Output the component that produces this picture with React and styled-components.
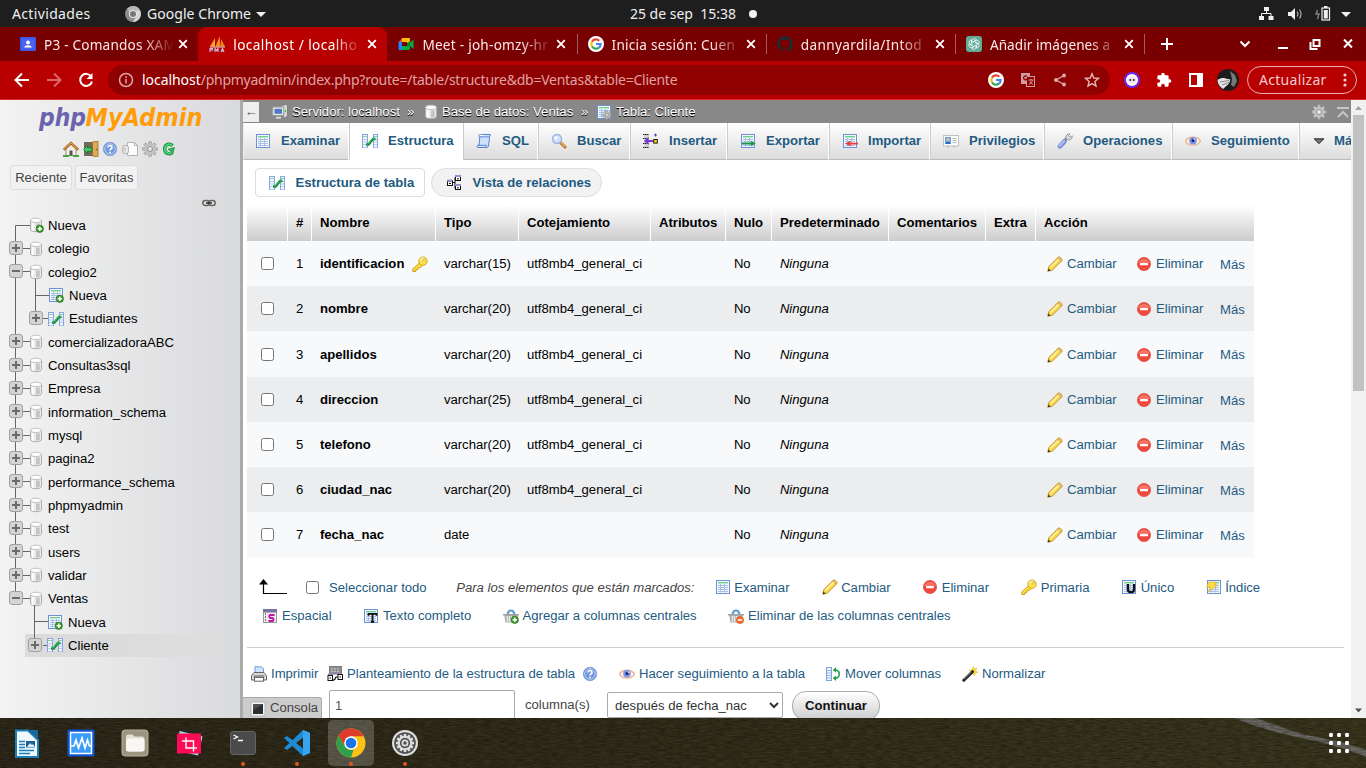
import React from "react";
import styled, { createGlobalStyle, css } from "styled-components";

const Global = createGlobalStyle`
  * { box-sizing: border-box; }
  html, body { margin: 0; padding: 0; overflow: hidden; }
  svg { display: block; flex: none; }
`;

const Desktop = styled.div`
  width: 1366px;
  height: 768px;
  display: flex;
  flex-direction: column;
  overflow: hidden;
  background: #fff;
  font-family: "Liberation Sans", Arial, sans-serif;
`;

/* ---------- icons ---------- */

const TableBase = () => (
  <>
    <rect x="1.5" y="1.5" width="13" height="13" fill="#f4f8ff" stroke="#6f8fd6" />
    <rect x="3" y="3" width="10" height="1.4" fill="#6fd08a" />
    <path d="M3 6.5h10M3 8.5h10M3 10.5h10M3 12.5h10M5.5 5v8.5M9.5 5v8.5" stroke="#a9bfe8" strokeWidth="1" />
  </>
);
const PlusBadge = () => (
  <>
    <circle cx="11.800" cy="11.800" r="3.700" fill="#3a9a2c" stroke="#246d1a" strokeWidth=".6" />
    <path d="M11.800 9.600v4.400M9.600 11.800H14" stroke="#fff" strokeWidth="1.500" />
  </>
);
const Cylinder = () => (
  <>
    <path d="M2.500 3.500v9c0 1.300 2.500 2.200 5.500 2.200s5.500-.9 5.500-2.200v-9z" fill="#ececec" stroke="#adadad" />
    <path d="M8 6.500h3.800V13L8 13.800z" fill="#c4c4c4" />
    <path d="M4 6v7.300l1.500.6V6.400z" fill="#fff" />
    <ellipse cx="8" cy="3.400" rx="5.500" ry="2.200" fill="#fdfdfd" stroke="#c3c3c3" />
  </>
);
const Basket = () => (
  <>
    <path d="M4.500 7C5 3.500 6.500 2.500 8 2.500S11 3.500 11.500 7" fill="none" stroke="#5b9bd0" strokeWidth="2.200" />
    <path d="M0 6h16v1.500h-1.300L13.500 14.500h-11L1.300 7.500H0z" fill="#a5a5a5" />
    <path d="M2.500 9h11M3 11h10.500M3 13h10M4.500 8v6M6.500 8v6M8.500 8v6M10.500 8v6M12.500 8v6" stroke="#fff" strokeWidth=".6" />
  </>
);
const GearShape = ({ fill, stroke, hole }) => (
  <>
    {[0, 45, 90, 135].map((a) => (
      <rect key={a} x="6.600" y=".6" width="2.800" height="14.800" rx=".5" fill={fill} stroke={stroke} strokeWidth=".6" transform={`rotate(${a} 8 8)`} />
    ))}
    <circle cx="8" cy="8" r="5.300" fill={fill} />
    <circle cx="8" cy="8" r="2.400" fill={hole} stroke={stroke} />
  </>
);

const ART = {
  table: <TableBase />,
  tableNew: (<><TableBase /><PlusBadge /></>),
  tableGear: (<><TableBase /><g transform="translate(6 6) scale(.62)"><GearShape fill="#b9b9b9" stroke="#777" hole="#eee" /></g></>),
  db: <Cylinder />,
  dbNew: (<><Cylinder /><PlusBadge /></>),
  structure: (
    <>
      <rect x="0" y="1" width="5.500" height="14" fill="#f2f6ff" />
      <rect x="11" y="1" width="5" height="14" fill="#f2f6ff" />
      <path d="M.500 1v14M5.500 1v14M11.500 1v14M15.500 1v14" stroke="#8aa6e2" />
      <path d="M1 1.500h4M12 1.500h3" stroke="#8aa6e2" />
      <path d="M1 3.500h4M12 3.500h3" stroke="#7fd59a" />
      <path d="M1 6.500h4M1 9h4M1 11.500h4M12 6.500h3M12 9h3M12 11.500h3M1 14.500h4M12 14.500h3" stroke="#b9caee" />
      <path d="M4 11.500h2.500l4.500-5.500h2.500" fill="none" stroke="#128a38" strokeWidth="2.600" />
      <path d="M4.500 11.100h1.700l4.500-5.300h2.300" fill="none" stroke="#3fc568" strokeWidth=".9" />
    </>
  ),
  sql: (
    <>
      <path d="M4 1.500h10.500l-.8 2-1.200 9.500c-.2 1-.9 1.500-1.800 1.500H1.500c-.8-.6-.6-2 .6-2.200h1z" fill="#cfe2fb" stroke="#5a87d4" />
      <path d="M4 1.500c-1.300 0-1.600 2.200-.3 2.300h9.800" fill="#fff" stroke="#5a87d4" />
      <path d="M1.500 12.300h8.800v2" fill="none" stroke="#5a87d4" />
    </>
  ),
  search: (
    <>
      <path d="M9.500 9.500l4.500 4.500" stroke="#b06c1e" strokeWidth="3" strokeLinecap="round" />
      <path d="M9.800 9.500l4 4" stroke="#f3b75e" strokeWidth="1.200" strokeLinecap="round" />
      <circle cx="6" cy="6" r="4.500" fill="#cfe1ff" stroke="#9db3e0" strokeWidth="1.400" />
      <circle cx="5" cy="4.800" r="1.600" fill="#fff" />
    </>
  ),
  insert: (
    <>
      <rect x="1" y="1" width="5" height="14" fill="#d2d2d2" />
      <path d="M0 1.500h6M0 5.500h6M0 10.500h6M0 14.500h6" stroke="#222" strokeDasharray="1.500 .5" />
      <path d="M1 8l4.500-4V7H10v2H5.500v3z" fill="#7a35d6" />
      <rect x="10.700" y="6.500" width="3.600" height="3.600" fill="#ffd400" stroke="#222" />
      <path d="M12.500.5v3M11 2h3" stroke="#7a35d6" strokeWidth="1.100" />
    </>
  ),
  export: (<><TableBase /><path d="M2 9.500h9V7.800l4.800 2.700-4.800 2.700v-1.700H2z" fill="#1b9a43" /></>),
  import: (<><TableBase /><path d="M16 9.700H8.500V7.800L3 10.600l5.500 2.800v-1.900H16z" fill="#ec3b3b" /></>),
  rights: (
    <>
      <rect x=".5" y="2.500" width="15" height="10.500" fill="#fbfbfb" stroke="#c1c1c1" />
      <rect x="2" y="4" width="6" height="7" fill="#5fa5ea" />
      <circle cx="5" cy="6.500" r="1.700" fill="#f0bd8d" />
      <path d="M2.500 11c.3-3 4.700-3 5 0z" fill="#2b66c0" />
      <path d="M9.500 5.500h4M9.500 7.500h4M9.500 9.500h4" stroke="#b5b5b5" />
      <path d="M4 13.800h2M10 13.800h2" stroke="#aaa" />
    </>
  ),
  wrench: (
    <>
      <path d="M7.500 7.500l3.200-3.300" stroke="#9b9b9b" strokeWidth="3" />
      <path d="M8.800 4.800C8.500 2.500 10.500.6 13 .9l-1.700 2 1.700 1.500 2.300-1.600c.4 2.300-1.600 4.600-4 4.200z" fill="#e0e0e0" stroke="#888" strokeWidth=".8" />
      <path d="M3 13.200l4.500-4.800" stroke="#6f84d2" strokeWidth="4.600" strokeLinecap="round" />
      <path d="M2.800 12.800l4.400-4.600" stroke="#a9baf5" strokeWidth="2.600" strokeLinecap="round" />
    </>
  ),
  eye: (
    <>
      <path d="M.5 8C3 3 13 3 15.500 8 13 13.500 3 13.500 .5 8z" fill="#fdf1e4" stroke="#e8b48d" strokeWidth="1.400" />
      <circle cx="8" cy="7.800" r="3.800" fill="#7b93ec" />
      <circle cx="8" cy="7.500" r="1.500" fill="#15205c" />
      <circle cx="9.400" cy="6.300" r=".7" fill="#fff" />
    </>
  ),
  more: <path d="M2.500 5.500h11L8 11z" fill="#777" stroke="#111" />,
  relations: (
    <>
      <path d="M6 7.500h3M9 2.500v11M9 3.500h1M9 12.500h1" stroke="#111" fill="none" />
      <rect x="1.500" y="6" width="5" height="4.500" fill="#fff" stroke="#111" />
      <rect x="9.500" y="1.500" width="5" height="4" fill="#fff" stroke="#111" />
      <rect x="9.500" y="10.500" width="5" height="4" fill="#fff" stroke="#111" />
      <path d="M1 5.500h5M9 1h6M9 10h6" stroke="#a48bd0" strokeWidth="1.800" />
      <path d="M11 3.800h2M11 12.800h2M3 8.500h2" stroke="#111" />
    </>
  ),
  key: (
    <>
      <path d="M8.500 6L.8 12.800v2.700h3v-1.800h2l.3-2 2.200-.2L11 9" fill="#f8dc3a" stroke="#c79a1b" strokeWidth=".9" />
      <circle cx="11" cy="5.200" r="4.200" fill="#fbe34f" stroke="#d0a21e" strokeWidth=".9" />
      <path d="M8.300 4.200C9 2.500 11 2 12 2.300" fill="none" stroke="#fff6b8" strokeWidth="1.200" />
      <circle cx="12.200" cy="4" r="1.100" fill="#fff" stroke="#c79a1b" strokeWidth=".6" />
    </>
  ),
  pencil: (
    <>
      <path d="M.8 15.200l.9-4.500L11.200 1.300c1.400-1.100 4.600 1.900 3.500 3.500L5.200 14.300z" fill="#f9d746" stroke="#b98a22" strokeWidth=".9" />
      <path d="M3.500 11.500l8.300-8.300" stroke="#fff3a8" strokeWidth="1.600" />
      <path d="M10.800 1.900l3.400 3.300.7-1.300c.3-1.300-1.900-3.200-3-2.800z" fill="#f5c486" stroke="#b98a22" strokeWidth=".5" />
      <path d="M.8 15.200l.6-2.800 2.200 2.200z" fill="#333" />
    </>
  ),
  drop: (
    <>
      <circle cx="8" cy="8" r="6.600" fill="#f0483c" stroke="#d9625a" strokeWidth=".9" />
      <path d="M2.300 7C3.500 1.500 12.500 1.500 13.700 7z" fill="#ff9184" opacity=".6" />
      <rect x="4" y="6.900" width="8" height="2.300" rx=".5" fill="#fff" />
    </>
  ),
  unique: (<><TableBase /><path d="M7 5v5.500c0 3.600 6 3.600 6 0V5" fill="none" stroke="#111" strokeWidth="2.300" /></>),
  index: (<><TableBase /><path d="M3 3h7.500L8.500 6h3L2.500 12.500 4.500 8H.5z" fill="#fbe04b" stroke="#e0b22c" strokeWidth=".8" /></>),
  spatial: (
    <>
      <rect x="1.500" y="1.500" width="13" height="13" fill="#eee" stroke="#999" />
      <rect x="1" y="1" width="14" height="3.500" fill="#7c729f" />
      <path d="M3.500 5v10" stroke="#777" strokeDasharray="2 1" />
      <path d="M12.500 7H8.300c-1.400 0-1.400 2.900 0 2.900h2c1.600 0 1.600 3.100 0 3.100H6.500" fill="none" stroke="#c414a8" strokeWidth="2" />
    </>
  ),
  fulltext: (<><TableBase /><path d="M5 5.800h9M9.500 5v9.500M7.800 13.800h3.400M5.500 5v2.800M13.500 5v2.800" stroke="#111" strokeWidth="1.800" /></>),
  basketAdd: (<><Basket /><PlusBadge /></>),
  basketDel: (<><Basket /><circle cx="12" cy="12" r="3.600" fill="#ee6a2c" stroke="#c14c12" strokeWidth=".6" /><path d="M9.800 12h4.400" stroke="#fff" strokeWidth="1.500" /></>),
  print: (
    <>
      <path d="M4 7V.8h6.500L12.500 3v4z" fill="#cfe4ff" stroke="#6f9ae0" />
      <path d="M3 6.500h10l2.500 3v4.500H.5V9.500z" fill="#dadada" stroke="#666" />
      <path d="M2.500 10h11" stroke="#555" />
      <rect x="3.500" y="11.500" width="9" height="3.700" fill="#fff" stroke="#666" />
    </>
  ),
  propose: (
    <>
      <rect x="2.500" y=".5" width="12" height="7.500" fill="#8f8f8f" stroke="#7c7c7c" />
      <path d="M4 3h9M4 5.500h9" stroke="#c6c6c6" strokeDasharray="2 1" />
      <path d="M1 8.500h5M10 7.800h5" stroke="#9a84cc" strokeWidth="1.800" />
      <rect x="1" y="9.500" width="4.500" height="5" fill="#fff" stroke="#111" />
      <rect x="11" y="8.500" width="4.500" height="5" fill="#fff" stroke="#111" />
      <path d="M6 14.500l2-1.500 1-2h2M2.500 12H4M12.500 11H14" stroke="#111" fill="none" strokeWidth="1.200" />
    </>
  ),
  help: (
    <>
      <circle cx="8" cy="8" r="6.700" fill="#5b84cf" stroke="#8aa6dc" strokeWidth="1" />
      <circle cx="8" cy="8" r="5.300" fill="#7399dd" stroke="#dbe6fa" strokeWidth=".8" />
      <path d="M6 6.600c0-2.900 4.200-2.600 4 0C9.900 7.900 8 7.900 8 9.500M8 10.700v1.600" fill="none" stroke="#fff" strokeWidth="1.600" />
    </>
  ),
  move: (
    <>
      <rect x="1.500" y="1.500" width="5" height="13" fill="#eef4ff" stroke="#7f9fdf" />
      <path d="M2 4.500h4M2 7h4M2 9.500h4M2 12h4" stroke="#9ab4e8" />
      <path d="M8.500 4h2c5 .3 5 7.800 0 8.200h-2" fill="none" stroke="#1fa044" strokeWidth="1.500" />
      <path d="M8 4l3-2.700v5.400zM8 12.200l3-2.700v5.400z" fill="#1fa044" />
    </>
  ),
  wand: (
    <>
      <path d="M11.200.5l1 2.400 2.600-.8-.9 2.500 1.900 1.900-2.600.5-.6 2.600-2-1.800-2.400.7.900-2.500-1.900-1.700 2.700-.3z" fill="#fbe04b" stroke="#ddb322" strokeWidth=".6" />
      <path d="M1.800 14.200l8.700-8.500" stroke="#222" strokeWidth="3" strokeLinecap="round" />
      <path d="M2 13.300l7.500-7.300" stroke="#999" strokeWidth=".9" />
    </>
  ),
  server: (
    <>
      <path d="M9 2l4-1.500 2.500.5v11l-3.500 2.500z" fill="#d5d5d5" stroke="#777" strokeWidth=".8" />
      <path d="M13.500 6v2" stroke="#2ecc40" strokeWidth="1.400" />
      <rect x=".7" y="3" width="11" height="8.500" fill="#eaeaea" stroke="#999" />
      <rect x="2.500" y="4.800" width="7.500" height="5" fill="#4f7ac8" />
      <path d="M4 13.700h5" stroke="#ddd" strokeWidth="1.800" />
    </>
  ),
  home: (
    <>
      <path d="M3 8v6.500h10V8" fill="#f8f2e6" stroke="#9c8f78" />
      <path d="M.8 8.800L8 2l7.200 6.800" fill="none" stroke="#a8641d" strokeWidth="2.600" />
      <path d="M1 8.300l7-6.500 7 6.500" fill="none" stroke="#efb456" strokeWidth="1" />
      <rect x="6.500" y="9.500" width="3" height="5" fill="#555" />
      <path d="M0 15h6M10 15h6" stroke="#44a83d" strokeWidth="2" />
    </>
  ),
  exit: (
    <>
      <rect x="1" y="1" width="10" height="14" fill="#6f6a58" />
      <path d="M9.500 1l5.500-.8v15.600L9.500 15z" fill="#dfaa55" stroke="#9c6a22" strokeWidth=".8" />
      <path d="M.5 8.500l4-4v2.300h4.500v3.400H4.500v2.300z" fill="#44c768" stroke="#14722e" strokeWidth=".8" />
      <circle cx="13.500" cy="8.500" r=".7" fill="#754b0e" />
    </>
  ),
  docs: (
    <>
      <path d="M5.500 1.500h7l3 3v10h-10z" fill="#fcfcfc" stroke="#b4b4b4" />
      <path d="M12.500 1.500v3h3" fill="none" stroke="#b4b4b4" />
      <path d="M.8 5.500v6c1 1.300 4.500 1.300 5.500 0v-6c-1-1.300-4.500-1.300-5.500 0z" fill="#f0f0f0" stroke="#a5a5a5" />
      <path d="M3 6.500v4" stroke="#aaa" />
    </>
  ),
  gear: <GearShape fill="#c3c3c3" stroke="#8c8c8c" hole="#eee" />,
  reload: (
    <>
      <path d="M11.500 4.800C9 1.800 3.700 3.200 3.700 8c0 4.800 5 6 7.800 3.500" fill="none" stroke="#168a3c" strokeWidth="3.400" />
      <path d="M11.300 4.800C9 2 3.900 3.400 3.900 8c0 4.400 4.600 5.600 7.200 3.300" fill="none" stroke="#4fd078" strokeWidth="1.900" />
      <path d="M7 8.300L13.500 6.500 12 12z" fill="#35b860" stroke="#168a3c" strokeWidth=".7" />
    </>
  ),
  link: (
    <>
      <rect x="1.800" y="5.500" width="6.500" height="5" rx="2.500" fill="none" stroke="#666" strokeWidth="1.500" />
      <rect x="7.700" y="5.500" width="6.500" height="5" rx="2.500" fill="none" stroke="#666" strokeWidth="1.500" />
      <path d="M5 8h6" stroke="#333" strokeWidth="1.600" />
    </>
  ),
  console: (
    <>
      <rect x="1" y="1" width="14" height="14" fill="#f7f7f7" stroke="#b5b5b5" />
      <rect x="3" y="3" width="10" height="10" fill="#2d2f31" />
      <path d="M3 3h10L3 9z" fill="#4e5153" />
    </>
  ),
};
const Icon = ({ name, size = 16 }) => (
  <svg width={size} height={size} viewBox="0 0 16 16">{ART[name]}</svg>
);

/* ---------- GNOME top bar ---------- */

const uiFont = css`font-family: "Noto Sans", "Open Sans", sans-serif;`;

const TopBar = styled.header`
  ${uiFont}
  height: 27px;
  flex: none;
  display: grid;
  grid-template-columns: 1fr auto 1fr;
  align-items: center;
  background: #1e1e1e;
  color: #f0f0f0;
  font-size: 14px;
  line-height: 27px;
`;
const TopGroup = styled.div`
  display: flex;
  align-items: center;
  white-space: pre;
  justify-content: ${(p) => (p.$end ? "flex-end" : "flex-start")};
  padding-left: ${(p) => p.$left || 0}px;
  padding-right: ${(p) => p.$right || 0}px;
  gap: ${(p) => p.$gap || 0}px;
`;
const TopText = styled.span`
  width: ${(p) => (p.$w ? `${p.$w}px` : "auto")};
  margin-top: -1px;
  letter-spacing: ${(p) => p.$track || 0}px;
`;
const NoticeDot = styled.span`
  width: 8px;
  height: 8px;
  border-radius: 50%;
  background: #f2f2f2;
`;

/* ---------- browser chrome ---------- */

const TabStrip = styled.div`
  ${uiFont}
  height: 34px;
  flex: none;
  display: flex;
  background: #780000;
  color: #fbe9e9;
  padding-left: 9px;
`;
const BrowserTab = styled.div`
  width: 189.200px;
  height: 34px;
  flex: none;
  display: flex;
  align-items: center;
  padding: 0 9px 0 11px;
  border-radius: 9px 9px 0 0;
  background: ${(p) => (p.$active ? "#b80000" : "transparent")};
  color: ${(p) => (p.$active ? "#fff" : "#fbe9e9")};
  ${(p) => p.$active && css`box-shadow: -6px 18px 0 -6px #b80000, 6px 18px 0 -6px #b80000;`}
`;
const TabTitle = styled.span`
  width: 134px;
  margin-left: 8px;
  white-space: nowrap;
  font-size: 13.600px;
  letter-spacing: ${(p) => p.$track || 0}px;
  mask-image: linear-gradient(90deg, #000 74%, transparent 97%);
`;
const TabSeparator = styled.i`
  width: 1px;
  height: 20px;
  margin: 7px -1px 0 0;
  background: #a85a5a;
`;
const StripButtons = styled.div`
  display: flex;
  align-items: center;
  margin-left: -1.200px;
`;

const Toolbar = styled.div`
  ${uiFont}
  height: 39px;
  flex: none;
  display: flex;
  align-items: center;
  padding: 0 9px 1px 14px;
  background: #b80000;
  border-bottom: 1px solid #d42a2a;
`;
const NavButtons = styled.div`
  width: 94px;
  display: flex;
  gap: 16px;
`;
const Omnibox = styled.div`
  width: 1002px;
  height: 30px;
  flex: none;
  border-radius: 15px;
  display: flex;
  align-items: center;
  padding: 0 10px;
  background: #8f0000;
`;
const Url = styled.span`
  flex: 1;
  margin-left: 8px;
  font-size: 14px;
  letter-spacing: -.250px;
  color: #dfa3a3;
  b { font-weight: 400; color: #fff; letter-spacing: -.050px; }
`;
const OmniIcons = styled.div`
  display: flex;
  align-items: center;
  gap: 16px;
`;
const Extensions = styled.div`
  display: flex;
  align-items: center;
  gap: 16px;
  margin-left: 14px;
`;
const UpdateButton = styled.div`
  width: 110px;
  height: 28px;
  flex: none;
  margin-left: 8px;
  border: 1px solid #e9b0b0;
  border-radius: 14px;
  display: flex;
  align-items: center;
  justify-content: space-between;
  padding: 0 9px 0 11px;
  color: #f7cccc;
  font-size: 14px;
  letter-spacing: .300px;
`;

const GoogleG = ({ size = 16 }) => (
  <svg width={size} height={size} viewBox="0 0 16 16">
    <circle cx="8" cy="8" r="8" fill="#fff" />
    <path d="M11.300 4.700A4.700 4.700 0 0 0 4 5.600" fill="none" stroke="#ea4335" strokeWidth="2.100" />
    <path d="M4 5.600a4.700 4.700 0 0 0 0 4.800" fill="none" stroke="#fbbc05" strokeWidth="2.100" />
    <path d="M4 10.400a4.700 4.700 0 0 0 6.900 1.300" fill="none" stroke="#34a853" strokeWidth="2.100" />
    <path d="M8 8h4.700a4.700 4.700 0 0 1-1.800 3.700" fill="none" stroke="#4285f4" strokeWidth="2.100" />
  </svg>
);
const FAV = {
  classroom: (<svg width="16" height="16"><rect y="1" width="16" height="14" rx="1" fill="#4058e8" /><rect x="2" y="3" width="12" height="10" fill="#4a63f2" /><circle cx="8" cy="6.500" r="1.900" fill="#fff" /><path d="M4.300 11.500c0-3 7.400-3 7.400 0z" fill="#fff" /></svg>),
  pma: (<svg width="16" height="17"><path d="M1 10.500L6 2v8.500z" fill="#f5a623" /><path d="M6.500 10.500L10.500.5l1.200 10z" fill="#f78f1e" /><path d="M12 10.500V3l4 7.500z" fill="#e8871a" /><path d="M1 11h15" stroke="#e2d4c8" /><path d="M1 16v-3.500h2.500v1.500H1M6 16v-3.500l1.500 2 1.500-2V16M12 16l1.500-3.500L15 16M12.500 15h2" fill="none" stroke="#c9c4e6" strokeWidth="1.100" /></svg>),
  meet: (<svg width="16" height="16"><path d="M4 2h7a1 1 0 0 1 1 1v4H4z" fill="#fbbc04" /><path d="M4 2v4H.5z" fill="#ea4335" /><path d="M.5 6H4v8H1.500a1 1 0 0 1-1-1z" fill="#2684fc" /><path d="M4 10h8v3a1 1 0 0 1-1 1H4z" fill="#00ac47" /><path d="M9 8l3-3v5H9z" fill="#00832d" /><path d="M12 6.500l3.500-3v9.500L12 10z" fill="#00ac47" /><rect x="4" y="6" width="5" height="4" fill="#780000" /></svg>),
  google: <GoogleG />,
  github: (<svg width="16" height="16" viewBox="0 0 16 16"><path fill="#24292f" d="M8 0C3.580 0 0 3.580 0 8c0 3.540 2.290 6.530 5.470 7.590.4.070.55-.17.55-.38 0-.19-.01-.82-.01-1.490-2.010.37-2.530-.49-2.690-.94-.09-.23-.48-.94-.82-1.130-.28-.15-.68-.52-.01-.53.63-.01 1.080.58 1.230.82.72 1.210 1.870.87 2.330.66.07-.52.28-.87.51-1.070-1.780-.2-3.640-.89-3.640-3.950 0-.87.31-1.590.82-2.150-.08-.2-.36-1.020.08-2.120 0 0 .67-.21 2.200.82a7.400 7.400 0 0 1 4 0c1.530-1.040 2.200-.82 2.200-.82.44 1.100.16 1.920.08 2.120.51.56.82 1.270.82 2.150 0 3.070-1.870 3.750-3.650 3.950.29.25.54.73.54 1.480 0 1.070-.01 1.930-.01 2.200 0 .21.15.46.55.38A8 8 0 0 0 16 8c0-4.420-3.580-8-8-8z" /></svg>),
  gpt: (<svg width="16" height="16"><rect width="16" height="16" rx="3" fill="#62ab98" />{[0, 60, 120, 180, 240, 300].map((a) => (<path key={a} d="M6 8V4.600C6 2.500 9.500 1.800 10.300 4L7.600 5.600" fill="none" stroke="#fff" strokeWidth=".8" transform={`rotate(${a} 8 8)`} />))}</svg>),
};
const Cross = () => (
  <svg width="10" height="10" viewBox="0 0 10 10"><path d="M1.200 1.200l7.600 7.600M8.800 1.200L1.200 8.800" stroke="#fff" strokeWidth="1.800" /></svg>
);
const TABS = [
  ["classroom", "P3 - Comandos XAM", 0.2],
  ["pma", "localhost / localho", 0.45],
  ["meet", "Meet - joh-omzy-hr", 0.25],
  ["google", "Inicia sesión: Cuen", 0.25],
  ["github", "dannyardila/Intod", 0.35],
  ["gpt", "Añadir imágenes a", 0.05],
];

const BrowserChrome = () => (
  <>
    <TabStrip>
      {TABS.map(([fav, title, track], i) => (
        <React.Fragment key={fav}>
          <BrowserTab $active={i === 1}>
            {FAV[fav]}
            <TabTitle $track={track}>{title}</TabTitle>
            <Cross />
          </BrowserTab>
          {i > 1 && <TabSeparator />}
        </React.Fragment>
      ))}
      <StripButtons>
        <svg width="223" height="34" viewBox="1143 27 223 34" fill="none" stroke="#fff">
          <path d="M1161 44h12M1167 38v12" strokeWidth="2" />
          <path d="M1240.500 41.500l4.500 4.500 4.500-4.500" strokeWidth="2" />
          <path d="M1278 48h10" strokeWidth="2" />
          <path d="M1313.500 40h6v6h-6z" strokeWidth="2" />
          <path d="M1310.500 42v7h7" strokeWidth="2" />
          <path d="M1344 39.500l8 8M1352 39.500l-8 8" strokeWidth="2" />
        </svg>
      </StripButtons>
    </TabStrip>
    <Toolbar>
      <NavButtons>
        <svg width="16" height="16" fill="none" stroke="#fff" strokeWidth="2"><path d="M15 8H2M8 1.500L1.500 8 8 14.500" /></svg>
        <svg width="16" height="16" fill="none" stroke="#d76a6a" strokeWidth="2"><path d="M1 8h13M8 1.500L14.500 8 8 14.500" /></svg>
        <svg width="16" height="16" fill="none" stroke="#fff" strokeWidth="2"><path d="M13.200 4.500A6 6 0 1 0 14 9.500" /><path d="M14.500 1v6h-6z" fill="#fff" stroke="none" /></svg>
      </NavButtons>
      <Omnibox>
        <svg width="16" height="16" fill="none" stroke="#d9a7a7" strokeWidth="1.500"><circle cx="8" cy="8" r="6.500" /><path d="M8 7v4.500M8 4.300V6" /></svg>
        <Url><b>localhost</b>/phpmyadmin/index.php?route=/table/structure&amp;db=Ventas&amp;table=Cliente</Url>
        <OmniIcons>
          <GoogleG />
          <svg width="16" height="16"><rect x="1" y="1" width="9" height="11" fill="#cf9d9d" /><rect x="6.500" y="4.500" width="8" height="10" fill="#8f0000" stroke="#cf9d9d" /><path d="M7 4.500a2 2 0 1 0 .3 2.500H5.500" fill="none" stroke="#8f0000" strokeWidth="1.200" /><path d="M8.500 8h5M11 7v1.500M9 12.500c2-1 3-2.500 3.500-4M9.500 9.500l3.500 3" stroke="#cf9d9d" fill="none" /></svg>
          <svg width="16" height="16" fill="#d9a7a7"><circle cx="12" cy="3.500" r="2" /><circle cx="4" cy="8" r="2" /><circle cx="12" cy="12.500" r="2" /><path d="M12 3.500L4 8l8 4.500" fill="none" stroke="#d9a7a7" strokeWidth="1.300" /></svg>
          <svg width="16" height="16" viewBox="0 0 16 16" fill="none" stroke="#e3b5b5" strokeWidth="1.400"><path d="M8 1.800l1.800 4.200 4.700.4-3.600 3 1.100 4.600L8 11.600 4 14l1.100-4.600-3.600-3 4.700-.4z" /></svg>
        </OmniIcons>
      </Omnibox>
      <Extensions>
        <svg width="16" height="16"><circle cx="8" cy="8" r="7" fill="#fff" stroke="#6a2df0" strokeWidth="2" /><ellipse cx="8" cy="8" rx="4.800" ry="3.700" fill="#efe7ff" /><circle cx="6.300" cy="8" r="1" fill="#222" /><circle cx="9.800" cy="8" r="1" fill="#222" /></svg>
        <svg width="16" height="16" viewBox="0 0 24 24" fill="#fff"><path d="M20.500 11H19V7a2 2 0 0 0-2-2h-4V3.500a2.500 2.500 0 0 0-5 0V5H4a2 2 0 0 0-2 2v3.800h1.500a2.700 2.700 0 0 1 0 5.400H2V20a2 2 0 0 0 2 2h3.800v-1.500a2.700 2.700 0 0 1 5.400 0V22H17a2 2 0 0 0 2-2v-4h1.500a2.500 2.500 0 0 0 0-5z" /></svg>
        <svg width="16" height="16"><rect x="2" y="2" width="12" height="12" fill="none" stroke="#fff" strokeWidth="2" /><rect x="9" y="2" width="5" height="12" fill="#fff" /></svg>
        <svg width="19" height="22" viewBox="3 0 19 22" overflow="visible"><circle cx="11" cy="11" r="11" fill="#1c1c1c" /><path d="M.5 11c3-2 6-2.500 8-1.500l5 1-1.500 4-6 5.500c-3-2-5.500-5-5.500-9z" fill="#e2e2e2" /><path d="M13 2l5 4 2 6-3 6-3-2 1-6z" fill="#777" /><path d="M3 13l9-1.500M5 16l7-2.500" stroke="#888" /></svg>
      </Extensions>
      <UpdateButton>
        <span>Actualizar</span>
        <svg width="4" height="16" fill="#f7cccc"><circle cx="2" cy="3" r="1.600" /><circle cx="2" cy="8" r="1.600" /><circle cx="2" cy="13" r="1.600" /></svg>
      </UpdateButton>
    </Toolbar>
  </>
);

/* ---------- phpMyAdmin navigation ---------- */

const Page = styled.div`
  height: 618px;
  flex: none;
  display: flex;
  overflow: hidden;
  font-size: 13.120px;
  color: #444;
`;
const Sidebar = styled.aside`
  width: 243px;
  flex: none;
  border-right: 3px solid #aaa;
  background: linear-gradient(90deg, #f3f3f3, #d9dadc);
  display: flex;
  flex-direction: column;
`;
const LogoBox = styled.div`
  height: 41px;
  padding: 3px 0 0 36px;
`;
const QuickIcons = styled.div`
  height: 16px;
  display: flex;
  gap: 3.700px;
  padding-left: 63px;
`;
const QuickButtons = styled.div`
  display: flex;
  gap: 3px;
  margin: 8px 0 0 10px;
`;
const QuickButton = styled.button`
  width: ${(p) => p.$w}px;
  height: 25px;
  padding: 0;
  border: 1px solid #ddd;
  border-radius: 3px;
  background: #f2f2f2;
  font: inherit;
  color: #444;
`;
const LinkRow = styled.div`
  height: 23.600px;
  display: flex;
  align-items: center;
  padding: 1.500px 0 0 201px;
`;
const Tree = styled.div`
  display: flex;
  flex-direction: column;
`;
const TreeRow = styled.div`
  height: 23.330px;
  display: flex;
  align-items: center;
  color: #000;
`;
const TreeInner = styled.div`
  display: flex;
  align-items: center;
  height: 23.330px;
  flex: 1;
  ${(p) => p.$active && css`background: linear-gradient(90deg, #dbdbdb, #dcdcdc 60%, rgba(220, 220, 220, 0));`}
`;
const TreeLabel = styled.span`
  margin: .800px 0 0 ${(p) => p.$gap}px;
`;
const Toggle = ({ x, open }) => (
  <g>
    <rect x={x - 6.5} y="4.500" width="13" height="13" rx="2.500" fill="#d4d4d4" stroke="#a0a0a0" />
    <path d={open ? `M${x - 4} 11h8` : `M${x - 4} 11h8M${x} 7v8`} stroke="#6b6b6b" strokeWidth="2" />
  </g>
);
const line = { stroke: "#666", fill: "none" };
const rootGutter = (kind, last) => (
  <svg width="28" height="23" overflow="visible">
    {kind === "first" ? (
      <path d="M30 11.500H15.500V24" {...line} />
    ) : (
      <>
        <path d={last ? "M15.500 -1V11" : "M15.500 -1V24"} {...line} />
        <path d="M22 11.500h8" {...line} />
        <Toggle x={16} open={kind === "open"} />
      </>
    )}
  </svg>
);
const TREE = [
  ["first", "Nueva", "dbNew"],
  ["closed", "colegio", "db"],
  ["open", "colegio2", "db"],
  ["leaf", "Nueva", "tableNew", true, 0],
  ["sub", "Estudiantes", "structure", true, 0],
  ...["comercializadoraABC", "Consultas3sql", "Empresa", "information_schema", "mysql", "pagina2", "performance_schema", "phpmyadmin", "test", "users", "validar"].map((n) => ["closed", n, "db"]),
  ["openLast", "Ventas", "db"],
  ["leaf", "Nueva", "tableNew", false, 1],
  ["sub", "Cliente", "structure", false, 1, true],
];

const TreeItem = ({ item }) => {
  const [kind, label, icon, trunk, shift, active] = item;
  if (kind === "leaf" || kind === "sub") {
    const x = 35.5 - shift;
    return (
      <TreeRow>
        <svg width={25} height="23" overflow="visible">
          {trunk && <path d="M15.500 -1V24" {...line} />}
        </svg>
        <TreeInner $active={active}>
          <svg width={23 - shift} height="23" viewBox={`25 0 ${23 - shift} 23`} overflow="visible">
            <path d={kind === "leaf" ? `M${x} -5V24M${x} 11.500H49` : `M${x} -1V11M43 11.500h6`} {...line} />
            {kind === "sub" && <Toggle x={36 - shift} />}
          </svg>
          <Icon name={icon} />
          <TreeLabel $gap={5}>{label}</TreeLabel>
        </TreeInner>
      </TreeRow>
    );
  }
  return (
    <TreeRow>
      {rootGutter(kind === "openLast" ? "open" : kind, kind === "openLast")}
      <Icon name={icon} />
      <TreeLabel $gap={4}>{label}</TreeLabel>
    </TreeRow>
  );
};

/* ---------- phpMyAdmin main area ---------- */

const Main = styled.main`
  width: 1108px;
  flex: none;
  display: flex;
  flex-direction: column;
  position: relative;
  overflow: hidden;
  background: #fff;
`;
const Crumbs = styled.div`
  height: 23px;
  flex: none;
  display: flex;
  align-items: center;
  background: #888;
  color: #fff;
  text-shadow: 0 1px 0 #000;
  white-space: nowrap;
`;
const BackButton = styled.span`
  width: 16px;
  height: 20px;
  margin-right: 13px;
  background: #eee;
  color: #555;
  text-shadow: none;
  text-align: center;
  line-height: 20px;
`;
const CrumbText = styled.span`
  width: ${(p) => p.$w}px;
  margin-left: ${(p) => p.$gap || 0}px;
`;
const MenuTabs = styled.nav`
  height: 37px;
  flex: none;
  display: flex;
`;
const MenuTab = styled.div`
  width: ${(p) => p.$w}px;
  height: 37px;
  flex: none;
  display: flex;
  align-items: center;
  gap: ${(p) => (p.$last ? 8 : 10)}px;
  padding: 0 0 1px ${(p) => (p.$first ? 11 : 12)}px;
  border-left: 1px solid ${(p) => (p.$first ? "#eee" : "#ccc")};
  border-right: 1px solid #fff;
  border-bottom: 1px solid ${(p) => (p.$active ? "#fff" : "#bbb")};
  background: ${(p) => (p.$active ? "#fff" : "linear-gradient(#fff, #dcdcdc)")};
  color: #235a81;
  font-weight: 700;
  white-space: nowrap;
`;
const SubTabs = styled.div`
  display: flex;
  gap: 6px;
  margin: 8px 0 0 12px;
`;
const SubTab = styled.div`
  width: ${(p) => p.$w}px;
  height: 29px;
  display: flex;
  align-items: center;
  gap: 10.500px;
  padding-left: ${(p) => (p.$active ? 13 : 14)}px;
  border: 1px solid #ddd;
  border-radius: ${(p) => (p.$active ? "4px" : "15px")};
  background: ${(p) => (p.$active ? "#fff" : "#f2f2f2")};
  color: #235a81;
  font-weight: 700;
`;
const GRID = "41px 24px 124px 83px 132px 75px 46px 117px 97px 50px 218px";
const Grid = styled.div`
  width: 1007px;
  flex: none;
  margin: 8px 0 0 4px;
  color: #000;
`;
const HeadRow = styled.div`
  display: grid;
  grid-template-columns: ${GRID};
  height: 36px;
`;
const HeadCell = styled.div`
  display: flex;
  align-items: center;
  padding: 0 0 2px 8px;
  border-right: 1px solid #fff;
  background: linear-gradient(#fff, #ccc);
  font-weight: 700;
  &:last-child { border-right: 0; }
`;
const BodyRow = styled.div`
  display: grid;
  grid-template-columns: ${GRID};
  height: 45.230px;
  background: ${(p) => (p.$odd ? "#f7f9fb" : "#ebedef")};
`;
const Cell = styled.div`
  display: flex;
  align-items: center;
  padding-left: 7.900px;
  white-space: nowrap;
  font-weight: ${(p) => (p.$bold ? 700 : 400)};
  font-style: ${(p) => (p.$italic ? "italic" : "normal")};
  gap: 8px;
`;
const Check = styled.input`
  width: 13px;
  height: 13px;
  flex: none;
  margin: 0 0 0 ${(p) => p.$left}px;
`;
const Action = styled.span`
  display: flex;
  align-items: center;
  flex: none;
  gap: ${(p) => p.$gap ?? 3.5}px;
  width: ${(p) => (p.$w ? `${p.$w}px` : "auto")};
  color: #235a81;
  white-space: nowrap;
  svg { margin-top: ${(p) => p.$drop || 0}px; }
`;
const Actions = styled(Cell)`
  gap: 0;
  padding-left: 11px;
`;
const MoreLink = styled.span`
  padding-top: 1.800px;
  color: #235a81;
`;
const Line = styled.div`
  display: flex;
  align-items: center;
  height: 28px;
  flex: none;
  margin-top: ${(p) => p.$top || 0}px;
  padding-left: ${(p) => p.$left}px;
`;
const MarkedLabel = styled.i`
  width: 258.500px;
  margin-left: 29.500px;
`;
const SelectAll = styled.span`
  margin-left: 10px;
  color: #235a81;
`;
const Rule = styled.hr`
  width: 1097px;
  height: 1px;
  flex: none;
  margin: 18px 0 0 4px;
  border: 0;
  background: #ccc;
`;
const FormRow = styled.div`
  display: flex;
  align-items: flex-start;
  flex: none;
  margin: 3px 0 0 86px;
`;
const NumberInput = styled.input`
  width: 186px;
  height: 30px;
  padding: 0 5px;
  border: 1px solid #aaa;
  border-radius: 2px;
  font: inherit;
  color: #555;
`;
const FormText = styled.span`
  width: 82px;
  margin-left: 10px;
  line-height: 30px;
`;
const Position = styled.select`
  width: 176px;
  height: 26px;
  margin-top: 2px;
  padding: 0 3px;
  border: 1px solid #aaa;
  border-radius: 2px;
  background: #fff;
  font: inherit;
  color: #333;
`;
const Submit = styled.button`
  width: 88px;
  height: 30px;
  margin: 1px 0 0 9px;
  padding: 0 0 1px;
  border: 1px solid #aaa;
  border-radius: 14px;
  background: linear-gradient(#fff, #ccc);
  font: inherit;
  font-weight: 700;
  color: #111;
`;
const ConsoleTab = styled.div`
  position: absolute;
  left: 0;
  bottom: 0;
  width: 79px;
  height: 21px;
  display: flex;
  align-items: center;
  gap: 4px;
  padding: 0 0 1px 7px;
  border: 1px solid #aaa;
  border-width: 1px 1px 0 0;
  border-radius: 0 3px 0 0;
  background: #ccc;
  svg { margin-top: 2px; }
`;
const ScrollTrack = styled.div`
  width: 15px;
  display: flex;
  flex-direction: column;
  align-items: center;
  justify-content: space-between;
  background: #f1f1f1;
`;
const ScrollTop = styled.div`
  display: flex;
  flex-direction: column;
  align-items: center;
`;
const ScrollThumb = styled.div`
  width: 11px;
  height: 276px;
  background: #c1c1c1;
`;
const CollapseIcon = styled.svg`
  margin-left: 8px;
`;

const MENU = [
  ["table", "Examinar", 106], ["structure", "Estructura", 114], ["sql", "SQL", 75], ["search", "Buscar", 92],
  ["insert", "Insertar", 97], ["export", "Exportar", 102], ["import", "Importar", 101], ["rights", "Privilegios", 114],
  ["wrench", "Operaciones", 128], ["eye", "Seguimiento", 127], ["more", "Más", 80],
];
const HEAD = ["", "#", "Nombre", "Tipo", "Cotejamiento", "Atributos", "Nulo", "Predeterminado", "Comentarios", "Extra", "Acción"];
const ROWS = [
  ["identificacion", "varchar(15)", true],
  ["nombre", "varchar(20)"],
  ["apellidos", "varchar(20)"],
  ["direccion", "varchar(25)"],
  ["telefono", "varchar(20)"],
  ["ciudad_nac", "varchar(20)"],
  ["fecha_nac", "date"],
];

const TableView = () => (
  <Main>
    <Crumbs>
      <BackButton>←</BackButton>
      <Icon name="server" />
      <CrumbText $gap={4} $w={115}>Servidor: localhost</CrumbText>
      <CrumbText $w={16}>»</CrumbText>
      <Icon name="db" />
      <CrumbText $gap={3} $w={139}>Base de datos: Ventas</CrumbText>
      <CrumbText $w={15}>»</CrumbText>
      <Icon name="tableGear" />
      <CrumbText $gap={4} $w={695}>Tabla: Cliente</CrumbText>
      <Icon name="gear" />
      <CollapseIcon width="16" height="16" fill="none" stroke="#c6c6c6" strokeWidth="2"><path d="M2 4h12M3 13l5-5 5 5" /></CollapseIcon>
    </Crumbs>
    <MenuTabs>
      {MENU.map(([icon, label, w], i) => (
        <MenuTab key={label} $w={w} $first={i === 0} $active={i === 1} $last={i === 10}>
          <Icon name={icon} size={i === 10 ? 14 : 16} />
          <span>{label}</span>
        </MenuTab>
      ))}
    </MenuTabs>
    <SubTabs>
      <SubTab $w={170} $active><Icon name="structure" />Estructura de tabla</SubTab>
      <SubTab $w={171}><Icon name="relations" />Vista de relaciones</SubTab>
    </SubTabs>
    <Grid>
      <HeadRow>{HEAD.map((h, i) => <HeadCell key={i}>{h}</HeadCell>)}</HeadRow>
      {ROWS.map(([name, type, key], i) => (
        <BodyRow key={name} $odd={i % 2 === 0}>
          <Cell><Check type="checkbox" $left={6} /></Cell>
          <Cell>{i + 1}</Cell>
          <Cell $bold>{name}{key && <Icon name="key" />}</Cell>
          <Cell>{type}</Cell>
          <Cell>{type === "date" ? "" : "utf8mb4_general_ci"}</Cell>
          <Cell />
          <Cell>No</Cell>
          <Cell $italic>Ninguna</Cell>
          <Cell />
          <Cell />
          <Actions>
            <Action $w={89} $gap={4} $drop={1}><Icon name="pencil" />Cambiar</Action>
            <Action $w={84} $gap={4} $drop={1}><Icon name="drop" />Eliminar</Action>
            <MoreLink>Más</MoreLink>
          </Actions>
        </BodyRow>
      ))}
    </Grid>
    <Line $left={15} $top={15.8}>
      <svg width="30" height="18"><path d="M5.500 3v12.500H29" fill="none" stroke="#000" strokeWidth="1.200" /><path d="M1 6.500L5.500 1 10 6.500z" fill="#000" /></svg>
      <Check type="checkbox" $left={18} />
      <SelectAll>Seleccionar todo</SelectAll>
      <MarkedLabel>Para los elementos que están marcados:</MarkedLabel>
      <Action $w={107}><Icon name="table" />Examinar</Action>
      <Action $w={100}><Icon name="pencil" />Cambiar</Action>
      <Action $w={99} $gap={4}><Icon name="drop" />Eliminar</Action>
      <Action $w={100} $gap={4}><Icon name="key" />Primaria</Action>
      <Action $w={85} $gap={4}><Icon name="unique" />Único</Action>
      <Action><Icon name="index" />Índice</Action>
    </Line>
    <Line $left={19}>
      <Action $w={101} $gap={4} $drop={2}><Icon name="spatial" />Espacial</Action>
      <Action $w={140} $gap={4} $drop={2}><Icon name="fulltext" />Texto completo</Action>
      <Action $w={225} $drop={2}><Icon name="basketAdd" />Agregar a columnas centrales</Action>
      <Action $gap={4} $drop={2}><Icon name="basketDel" />Eliminar de las columnas centrales</Action>
    </Line>
    <Rule />
    <Line $left={8} $top={11}>
      <Action $w={76} $gap={4} $drop={2}><Icon name="print" />Imprimir</Action>
      <Action $w={255} $gap={4} $drop={2}><Icon name="propose" />Planteamiento de la estructura de tabla</Action>
      <Action $w={37} $drop={2}><Icon name="help" /></Action>
      <Action $w={206} $gap={4} $drop={2}><Icon name="eye" />Hacer seguimiento a la tabla</Action>
      <Action $w={137} $gap={4} $drop={2}><Icon name="move" />Mover columnas</Action>
      <Action $gap={4} $drop={2}><Icon name="wand" />Normalizar</Action>
    </Line>
    <FormRow>
      <NumberInput defaultValue="1" />
      <FormText>columna(s)</FormText>
      <Position defaultValue="a"><option value="a">después de fecha_nac</option></Position>
      <Submit>Continuar</Submit>
    </FormRow>
    <ConsoleTab><Icon name="console" />Consola</ConsoleTab>
  </Main>
);

/* ---------- dock ---------- */

const Dock = styled.footer`
  height: 50px;
  flex: none;
  position: relative;
  display: flex;
  justify-content: space-between;
  background: #2e2916;
`;
const Wallpaper = styled.svg`
  position: absolute;
  inset: 0;
`;
const DockApps = styled.div`
  display: flex;
  position: relative;
`;
const DockApp = styled.div`
  width: 46px;
  height: 46px;
  margin: 2px 4px;
  border-radius: 5px;
  display: flex;
  flex-direction: column;
  align-items: center;
  padding-top: 8px;
  gap: 4px;
  background: ${(p) => (p.$active ? "rgba(255,255,255,.2)" : "transparent")};
`;
const RunDot = styled.i`
  width: 4px;
  height: 4px;
  border-radius: 50%;
  background: #e95420;
`;
const AppsGrid = styled.div`
  position: relative;
  padding: 15px 17px 0 0;
`;
const spokes = [0, 30, 60, 90, 120, 150, 180, 210, 240, 270, 300, 330];
const DOCK = [
  ["writer", <><path d="M3 1.500h12l10 9.500v17H3z" fill="#eef8fd" stroke="#1b7fb5" strokeWidth="2" /><path d="M16 1h9v9z" fill="#17679a" /><path d="M6 12.500h6M6 15.500h6M6 18.500h6M6 21.500h15M6 24.500h11" stroke="#1b7fb5" strokeWidth="1.500" /><rect x="13" y="12" width="9" height="6.500" fill="#1e5e89" /><path d="M14 18l3-4 2 2 1-1 2 3z" fill="#d6ecf8" /></>],
  ["monitor", <><rect x=".5" y=".5" width="27" height="27" rx="2" fill="#1255d4" /><rect x="3.500" y="3.500" width="21" height="21" fill="#3a9dfb" stroke="#fff" strokeWidth="1.500" /><path d="M4 17h3l2-6 2.500 8L15 9l3 10 2.500-8 2 6H24" fill="none" stroke="#fff" strokeWidth="1.700" /></>],
  ["files", <><rect x="1" y="1" width="26" height="26" rx="3" fill="#9b947e" stroke="#b7b09c" /><path d="M5 8c0-1.500 1-2.500 2.500-2.500h4l2 2H21c1.500 0 2.500 1 2.500 2.500v10c0 1.500-1 2.500-2.500 2.500H7.500C6 22.500 5 21.500 5 20z" fill="#e2ded2" /><rect x="5" y="9.500" width="18.500" height="13" rx="2.500" fill="#f8f7f3" /></>],
  ["shot", <><path d="M4.500 2l23 5.500-4.500 19-21-5z" fill="#a9d8ef" /><rect x="2" y="4.500" width="24" height="20" fill="#ff0a54" /><path d="M11 8.500v10.500h11M7 12h11.500v10.500" fill="none" stroke="#fff" strokeWidth="1.400" /></>],
  ["term", <><rect x="1.500" y="2.500" width="25" height="23" rx="2.500" fill="#4a4a4a" stroke="#636363" /><path d="M4.500 6l4 2-4 2M9 11.500h5" fill="none" stroke="#fff" strokeWidth="1.300" /></>, true],
  ["code", <><path d="M20 1l7 3v20l-7 3L9.500 17 4 21l-3-2 5.500-5L1 9l3-2 5.500 4zM20 8.500L13 14l7 5.500z" fill="#1f8ad2" fillRule="evenodd" /><path d="M20 1l7 3v20l-7 3z" fill="#36a4ee" /></>, true],
  ["chrome", <g transform="translate(-1 -1)"><circle cx="15" cy="15" r="14.500" fill="#fbc116" /><path d="M2.400 7.800A14.500 14.500 0 0 1 15 .5c5.400 0 10 2.900 12.600 7.700H15L9 18.500z" fill="#dd3b2c" /><path d="M2.400 7.800l6.800 11c2 3 6 3.600 8.500 2.500L15 29.500A14.500 14.500 0 0 1 2.400 7.800z" fill="#2da04c" /><circle cx="15" cy="15" r="6.800" fill="#fff" /><circle cx="15" cy="15" r="5.300" fill="#1a73e8" /></g>, true, true],
  ["settings", <><circle cx="14" cy="14" r="13" fill="#dedede" /><circle cx="14" cy="14" r="10.800" fill="#4f4f4f" />{spokes.map((a) => <rect key={a} x="12.700" y="5" width="2.600" height="4" fill="#dedede" transform={`rotate(${a} 14 14)`} />)}<circle cx="14" cy="14" r="6.500" fill="none" stroke="#dedede" strokeWidth="1.600" /><circle cx="14" cy="14" r="3.500" fill="#dedede" /><circle cx="14" cy="14" r="1.700" fill="#4f4f4f" /></>, true],
];

export default function App() {
  return (
    <Desktop>
      <Global />
      <TopBar>
        <TopGroup $left={12}>
          <TopText $track={0.35} $w={113}>Actividades</TopText>
          <svg width="16" height="16"><circle cx="8" cy="8" r="8" fill="#8c8c8c" /><path d="M8 0a8 8 0 0 1 7 4.200H8a4 4 0 0 0-3.600 2L2 3A8 8 0 0 1 8 0z" fill="#b8b8b8" /><path d="M15 4.200a8 8 0 0 1-7.300 11.700l3.900-6L11 4.200z" fill="#d6d6d6" /><circle cx="8" cy="8" r="4" fill="#eee" /><circle cx="8" cy="8" r="3" fill="#777" /></svg>
          <svg width="6" height="16" />
          <TopText $track={0.05} $w={103}>Google Chrome</TopText>
          <svg width="16" height="10"><path d="M6 3h10l-5 5z" fill="#f0f0f0" /></svg>
        </TopGroup>
        <TopGroup $gap={13} $left={21}>
          <TopText>25 de sep  15:38</TopText>
          <NoticeDot />
        </TopGroup>
        <TopGroup $end $right={14}>
          <svg width="94" height="18" viewBox="1258 4 94 18" fill="#f0f0f0">
            <path d="M1264 6h5v4h-5zM1259 15h5v4h-5zM1268.500 15h5v4h-5z" />
            <path d="M1261.500 15v-2.500h9.500V15M1266.500 10v2.500" fill="none" stroke="#f0f0f0" />
            <path d="M1288 11h3l4-4v12l-4-4h-3z" />
            <path d="M1297 10.500c1.200 1.500 1.200 3.500 0 5M1299.500 8.500c2 3 2 6 0 9" fill="none" stroke="#aaa" strokeWidth="1.200" />
            <path d="M1317.500 9l-1.500 4h3l-1.500 5" fill="none" stroke="#888" strokeWidth="1.300" />
            <rect x="1322" y="7" width="7.500" height="12" fill="none" stroke="#f0f0f0" strokeWidth="1.200" />
            <rect x="1324" y="5" width="3.500" height="2" /><rect x="1323.800" y="9" width="4" height="8.500" />
            <path d="M1341 11h10l-5 5z" />
          </svg>
        </TopGroup>
      </TopBar>
      <BrowserChrome />
      <Page>
        <Sidebar>
          <LogoBox>
            <svg width="180" height="34" overflow="visible" fontFamily="DejaVu Sans" fontWeight="700" fontStyle="italic" fontSize="24">
              <text x="3" y="23" fill="#6c63ae" textLength="47" lengthAdjust="spacingAndGlyphs">php</text>
              <text x="49.500" y="23" fill="#ff9c0a" textLength="117" lengthAdjust="spacingAndGlyphs">MyAdmin</text>
            </svg>
          </LogoBox>
          <QuickIcons>
            {["home", "exit", "help", "docs", "gear", "reload"].map((n) => <Icon key={n} name={n} />)}
          </QuickIcons>
          <QuickButtons>
            <QuickButton $w={62}>Reciente</QuickButton>
            <QuickButton $w={63}>Favoritas</QuickButton>
          </QuickButtons>
          <LinkRow><Icon name="link" /></LinkRow>
          <Tree>{TREE.map((item, i) => <TreeItem key={i} item={item} />)}</Tree>
        </Sidebar>
        <TableView />
        <ScrollTrack>
          <ScrollTop>
            <svg width="15" height="15"><path d="M4 10h7L7.500 6z" fill="#a3a3a3" /></svg>
            <ScrollThumb />
          </ScrollTop>
          <svg width="15" height="15"><path d="M4 5.500h7l-3.500 4z" fill="#505050" /></svg>
        </ScrollTrack>
      </Page>
      <Dock>
        <Wallpaper width="1366" height="50">
          <defs>
            <linearGradient id="grass" x1="0" x2="1"><stop offset="0" stopColor="#332d1c" /><stop offset=".5" stopColor="#37331d" /><stop offset="1" stopColor="#403c21" /></linearGradient>
            <filter id="grain" x="0" y="0" width="100%" height="100%">
              <feTurbulence type="fractalNoise" baseFrequency=".12 .7" numOctaves="3" seed="4" />
              <feColorMatrix values="0 0 0 0 0  0 0 0 0 0  0 0 0 0 0  .6 0 0 0 -.1" />
            </filter>
          </defs>
          <rect width="1366" height="50" fill="url(#grass)" />
          <path d="M1234 0h22c25 9 40 15 55 18 20 3 40 8 55 14v7c-20-8-42-15-60-18-25-5-50-12-72-21z" fill="#74736b" />
          <rect width="1366" height="50" filter="url(#grain)" />
        </Wallpaper>
        <DockApps>
          {DOCK.map(([name, art, running, active]) => (
            <DockApp key={name} $active={active}>
              <svg width="30" height="30" viewBox="-1 -1 30 30">{art}</svg>
              {running && <RunDot />}
            </DockApp>
          ))}
        </DockApps>
        <AppsGrid>
          <svg width="20" height="20" fill="#fff">
            {[2, 10, 18].map((y) => [2, 10, 18].map((x) => <rect key={`${x}-${y}`} x={x - 1.9} y={y - 1.9} width="3.800" height="3.800" rx="1" />))}
          </svg>
        </AppsGrid>
      </Dock>
    </Desktop>
  );
}
